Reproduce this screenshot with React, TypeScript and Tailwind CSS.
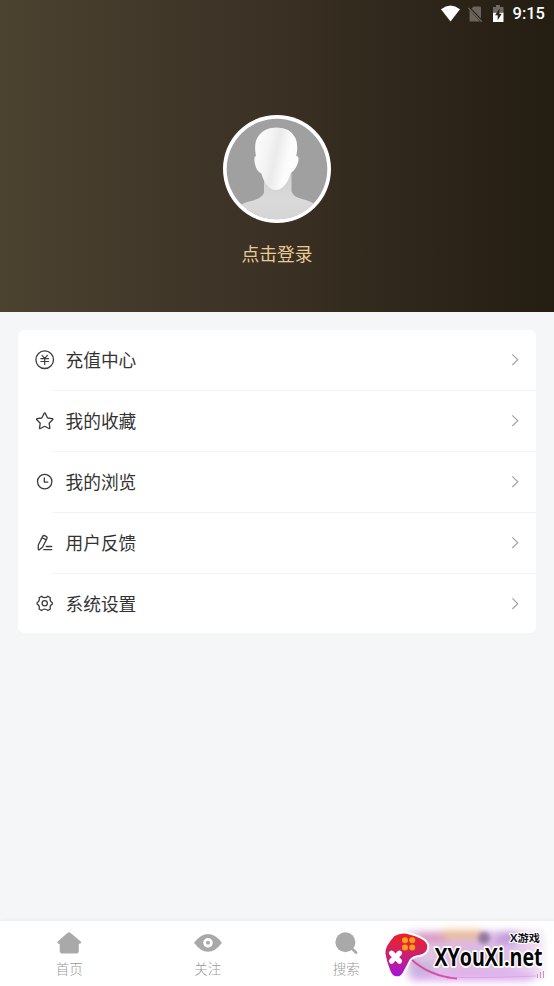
import React from 'react';

interface MenuItem {
    label: string;
    icon: React.ReactNode;
}

interface TabItem {
    label: string;
    icon: React.ReactNode;
}

const outline = {
    fill: 'none',
    stroke: '#3c3c3c',
    strokeWidth: 1.3,
    strokeLinecap: 'round',
    strokeLinejoin: 'round',
} as const;

const menuItems: MenuItem[] = [
    {
        label: '充值中心',
        icon: (
            <svg className="w-5 h-5" viewBox="0 0 20 20" {...outline}>
                <circle cx="9.7" cy="9.7" r="8.8" />
                <path d="M7 5.4l2.7 3 2.7-3M5.8 8.6h7.8M5.8 11.5h7.8M9.7 8.6v5.9" strokeWidth="1.2" />
            </svg>
        ),
    },
    {
        label: '我的收藏',
        icon: (
            <svg className="w-5 h-5" viewBox="0 0 20 20" {...outline}>
                <path d="M9.1 2.4q.6-1 1.2 0l2 4.1q.2.4.6.5l4.3.6q1.1.3.4 1.2l-3.2 3.2q-.3.3-.2.7l.7 4.1q.1 1.1-.9.7l-3.8-2q-.5-.2-1 0l-3.8 2q-1 .4-.9-.7l.7-4.1q.1-.4-.2-.7L1.8 8.8q-.7-.9.4-1.2L6.5 7q.4-.1.6-.5z" />
            </svg>
        ),
    },
    {
        label: '我的浏览',
        icon: (
            <svg className="w-5 h-5" viewBox="0 0 20 20" {...outline}>
                <circle cx="9.7" cy="9.6" r="7.2" />
                <path d="M9.3 6v4.1h3.5" />
            </svg>
        ),
    },
    {
        label: '用户反馈',
        icon: (
            <svg className="w-5 h-5" viewBox="0 0 20 20" {...outline}>
                <path d="M3.2 12.2L7.6 3.4q.7-1.3 2-.8l1.9 1q1.1.7.5 1.9l-4.5 8.7-3.3 2.6q-.8.4-.9-.5zM7.1 4.6l4.3 2.3M11.2 13.5h5.5M8.8 16.7h7.9" />
            </svg>
        ),
    },
    {
        label: '系统设置',
        icon: (
            <svg className="w-5 h-5" viewBox="0 0 20 20" {...outline}>
                <path d="M6.5 2.2Q9.7 4.9 12.9 2.2l2.4 1.5Q14.4 7.5 17.3 8.5v1.6Q14.4 11.3 15.3 15l-2.4 1.5Q9.7 13.8 6.5 16.5L4.1 15Q5 11.3 2.1 10.1V8.5Q5 7.5 4.1 3.7z" />
                <circle cx="9.7" cy="9.3" r="2.6" />
            </svg>
        ),
    },
];

const tabs: TabItem[] = [
    {
        label: '首页',
        icon: (
            <svg className="w-7 h-6" viewBox="0 0 28 24" fill="#a9a9a9">
                <path d="M12.4 2q1.6-1.4 3.2 0l9.9 8.3q1.4 1.7-.5 2.4h-1.2v7q0 2.8-2.8 2.8H7.500q-2.800 0-2.800-2.800v-7H3.500q-1.900-.7-.5-2.400z" />
            </svg>
        ),
    },
    {
        label: '关注',
        icon: (
            <svg className="w-7 h-6" viewBox="0 0 28 24">
                <path d="M.6 11Q7 2.9 14 2.9T27.4 11q.4.7 0 1.4Q21 20.800 14 20.800T.6 12.400Q.2 11.700.6 11z" fill="#a9a9a9" />
                <circle cx="14" cy="11.8" r="3.4" fill="none" stroke="#fff" strokeWidth="2.8" />
            </svg>
        ),
    },
    {
        label: '搜索',
        icon: (
            <svg className="w-7 h-6" viewBox="0 0 28 24">
                <path d="M19 16.8l5 4.7" stroke="#a9a9a9" strokeWidth="2.8" strokeLinecap="round" />
                <circle cx="13.4" cy="11.2" r="10" fill="#a9a9a9" />
            </svg>
        ),
    },
];

const StatusBar: React.FC = () => (
    <div className="flex h-[28px] items-center justify-end pr-[9px]">
        <svg className="mr-[7px] h-[18px] w-5" viewBox="0 0 20 18">
            <path d="M0 4.2Q9.5-3 19 4.2L9.5 16.5z" fill="#fff" />
        </svg>
        <svg className="mr-[8px] h-[18px] w-4" viewBox="0 0 16 18">
            <path d="M5.5 1.5H12q1 0 1 1v11L3.5 3.5zM1.5 5L12 16.500H2.500q-1 0-1-1z" fill="#69645c" />
            <path d="M.5 3l13.300 13.700" stroke="#69645c" strokeWidth="1.3" />
        </svg>
        <svg className="mr-[9px] h-[18px] w-3" viewBox="0 0 12 18">
            <path d="M4 0h4v2h3.500v7H1V2h3z" fill="#6e6960" />
            <path d="M1 7.800h10.500V17H1z" fill="#fff" />
            <path d="M7.600 3.500L3 10.200h2.700v5l4-6.500H7.300z" fill="#29231a" />
        </svg>
        <span className="pt-px font-[Roboto,sans-serif] text-[16.5px] leading-none font-medium text-white">9:15</span>
    </div>
);

const Avatar: React.FC = () => (
    <svg className="h-[108px] w-[108px]" viewBox="0 0 108 108">
        <defs>
            <linearGradient id="face" gradientUnits="userSpaceOnUse" x1="34" y1="34" x2="76" y2="43">
                <stop offset="0" stopColor="#fafafa" />
                <stop offset="0.25" stopColor="#f4f4f4" />
                <stop offset="0.45" stopColor="#ebebeb" />
                <stop offset="0.75" stopColor="#fcfcfc" />
            </linearGradient>
            <linearGradient id="body" x1="0" y1="0" x2="0" y2="1">
                <stop offset="0" stopColor="#d0d0d0" />
                <stop offset="0.55" stopColor="#dadada" />
                <stop offset="1" stopColor="#d4d4d4" />
            </linearGradient>
            <clipPath id="disc">
                <circle cx="54" cy="54" r="50.3" />
            </clipPath>
        </defs>
        <circle cx="54" cy="54" r="54" fill="#fff" />
        <circle cx="54" cy="54" r="50.3" fill="#a0a0a0" />
        <g clipPath="url(#disc)">
            <path d="M41 56v21q0 5-11 8.5-10 2-19 8v16h86V92q-9-6-18-8-10-3-10.500-8V56z" fill="url(#body)" />
            <path d="M54 12.500q-15.500 0-21 13-1.800 7 0 15.500-2.500.2-1.200 7 1.200 8 6.500 10.500 2.500 9 8 14 6.500 5 13 0 6-5 8.500-14.500 5.500-3.500 7.500-11.500 1-5.700-2-5.600 2.300-11-.8-18Q67 12.500 54 12.500z" fill="url(#face)" />
        </g>
    </svg>
);

const Watermark: React.FC = () => (
    <svg className="absolute right-0 bottom-0 h-[66px] w-[180px]" viewBox="374 920 180 66">
        <defs>
            <linearGradient id="pad" x1="0" y1="0" x2="0" y2="1">
                <stop offset="0" stopColor="#ed2024" />
                <stop offset="0.45" stopColor="#cf2165" />
                <stop offset="1" stopColor="#a514df" />
            </linearGradient>
            <linearGradient id="haze" x1="0" y1="0" x2="1" y2="0">
                <stop offset="0" stopColor="#e3cdec" />
                <stop offset="0.4" stopColor="#dfb8de" />
                <stop offset="0.75" stopColor="#dcbde9" />
                <stop offset="1" stopColor="#f6e3f2" />
            </linearGradient>
            <filter id="soft" x="-20%" y="-40%" width="140%" height="180%">
                <feGaussianBlur stdDeviation="3.5" />
            </filter>
            <filter id="softer" x="-50%" y="-50%" width="200%" height="200%">
                <feGaussianBlur stdDeviation="2" />
            </filter>
        </defs>
        <g filter="url(#soft)">
            <rect x="406" y="931" width="137" height="48" rx="5" fill="url(#haze)" />
            <rect x="418" y="933" width="30" height="10" fill="#d99bc0" />
            <rect x="443" y="930" width="38" height="9" fill="#e8bd94" />
            <path d="M502 932h18l-5 12h-22z" fill="#c39bdb" />
            <path d="M408 955q16 9 24 8l4 9-22 5z" fill="#c4b4da" />
            <path d="M415 975q60-4 124-1l-10 7H410z" fill="#e0aef0" />
        </g>
        <circle cx="484" cy="938" r="6" fill="#93799d" filter="url(#softer)" />
        <path d="M411 959q18 17 46 19.500" fill="none" stroke="#dc4aa8" strokeWidth="1.8" />
        <path d="M446 980q2-3 20-2.500t70-1.500" fill="none" stroke="#cf8ed8" strokeWidth="1" opacity="0.5" />
        <path d="M537.500 978v-4M540.500 978v-6M543.500 978v-7" stroke="#c98fc0" strokeWidth="1" />
        <path d="M542 936q5 2 4 10v27" fill="none" stroke="#faf4fc" strokeWidth="1.2" />
        <path d="M394.500 936q6-3.500 12-2.300 9 2.200 14.500 5 6.500 3 6.300 8.500-.5 6-7.300 7.500-8 1-10.500 5-3.500 7-6.500 12.500-2.500 5-7 4-4-.5-6-6.500-3.500-9-4.500-16-.3-4 1.500-7.500 3.500-6 7.500-10.200z" fill="url(#pad)" stroke="#fff" strokeWidth="4" paintOrder="stroke" />
        <g fill="#fca013">
            <circle cx="405" cy="940.3" r="3" />
            <circle cx="412.200" cy="940.3" r="3" />
            <circle cx="405" cy="947.600" r="3" />
            <circle cx="412.200" cy="947.600" r="3" />
        </g>
        <path d="M391.500 953.200l8 8M399.500 953.200l-8 8" stroke="#fff" strokeWidth="5.2" strokeLinecap="round" />
        <g transform="translate(434.5 966) scale(0.8 1)">
            <text textLength="135" lengthAdjust="spacingAndGlyphs" className="font-['Open_Sans',sans-serif] text-[25px] font-bold" fill="#050505" stroke="#fff" strokeWidth="3.4" strokeLinejoin="round" paintOrder="stroke">XYouXi.net</text>
        </g>
        <text x="510" y="942.2" textLength="30" lengthAdjust="spacingAndGlyphs" className="font-['Open_Sans','Noto_Sans_CJK_SC',sans-serif] text-[10.5px] font-bold" fill="#171119" stroke="#fff" strokeWidth="2.2" strokeLinejoin="round" paintOrder="stroke">X游戏</text>
    </svg>
);

export default function App() {
    return (
        <div className="flex h-[986px] w-[554px] flex-col overflow-hidden bg-[#f5f6f8] font-['Noto_Sans_CJK_SC',sans-serif]">
            <header className="h-[312px] shrink-0 bg-linear-to-r from-[#4b4230] via-[#3a3024] via-50% to-[#241d12]">
                <StatusBar />
                <div className="flex flex-col items-center pt-[87px]">
                    <Avatar />
                    <button type="button" className="mt-[17px] text-[17.8px] leading-[27px] text-[#e9ca94]">点击登录</button>
                </div>
            </header>

            <main className="flex-1 px-[18px] pt-[18px]">
                <div className="overflow-hidden rounded-md bg-white">
                    {menuItems.map((item, index) => (
                        <React.Fragment key={item.label}>
                            {index > 0 && <div className="ml-[34px] h-px bg-[#f3f3f4]" />}
                            <button type="button" className="flex h-[60px] w-full items-center pr-[15px] pl-[17px] text-left last:h-[59px]">
                                {item.icon}
                                <span className="ml-[10.5px] flex-1 pb-[2px] text-[17.7px] leading-[26px] text-[#333]">{item.label}</span>
                                <svg className="h-[14px] w-3" viewBox="0 0 12 14" fill="none" stroke="#a5a5a5" strokeWidth="1.2">
                                    <path d="M3.300 1.400L8.800 6.700l-5.500 5.300" />
                                </svg>
                            </button>
                        </React.Fragment>
                    ))}
                </div>
            </main>

            <nav className="relative flex h-[66px] shrink-0 border-t border-[#f0f0f0] bg-white shadow-[0_-1px_3px_rgba(0,0,0,0.03)]">
                {tabs.map((tab) => (
                    <button key={tab.label} type="button" className="flex w-1/4 flex-col items-center pt-[10px]">
                        {tab.icon}
                        <span className="mt-[3px] text-[13.5px] leading-5 font-light text-[#999]">{tab.label}</span>
                    </button>
                ))}
                <Watermark />
            </nav>
        </div>
    );
}
